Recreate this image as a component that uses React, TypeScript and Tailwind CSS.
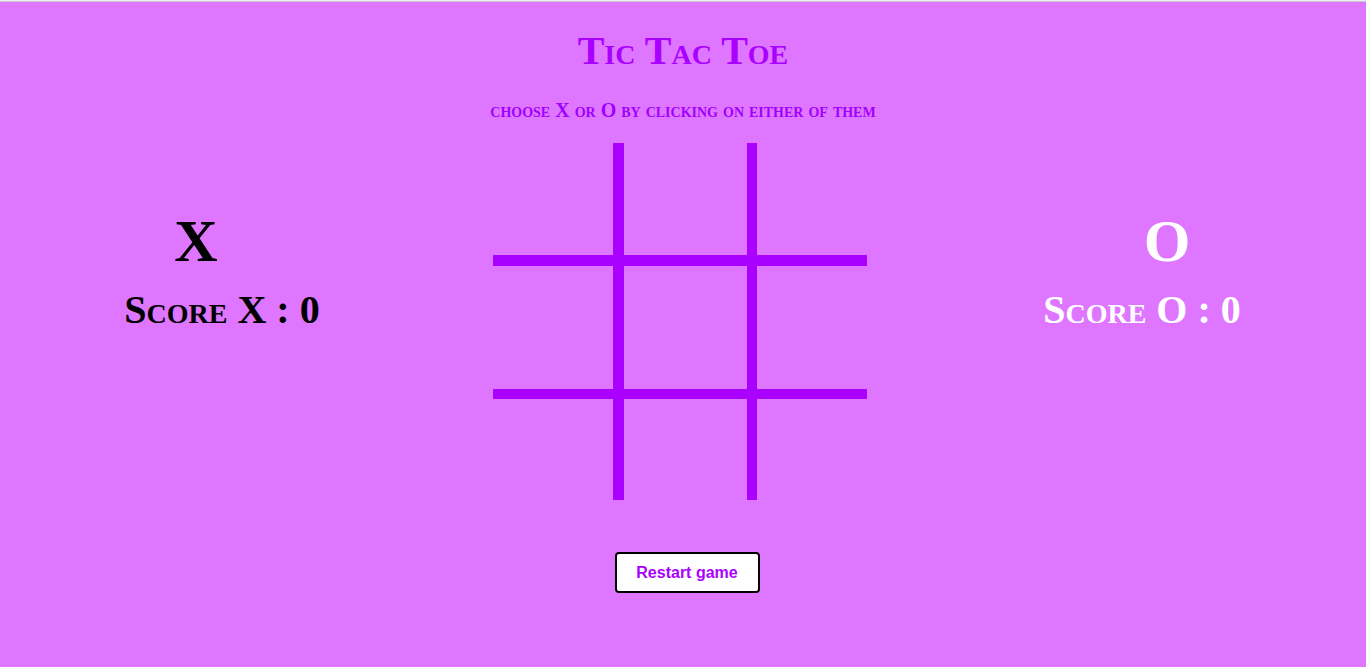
import React from "react";

const serif = { fontFamily: '"Liberation Serif", "Times New Roman", serif' };

export default function App() {
  return (
    <div className="w-full h-[667px] bg-[#df76ff] flex flex-col overflow-hidden" style={serif}>
      <div className="h-[1px] bg-[#eeeeee]" />
      <div className="h-[1px] bg-[#c8c8c8]" />
      <div className="flex flex-col items-center pt-[25px]">
        <h1 className="text-[40px] leading-[48px] font-bold text-[#aa00ff] [font-variant:small-caps]">
          Tic Tac Toe
        </h1>
        <p className="mt-[23px] text-[20px] leading-[24px] font-bold text-[#9f00ff] [font-variant:small-caps]">
          choose X or O by clicking on either of them
        </p>
      </div>
      <div className="flex mt-[21px]">
        <div className="w-[444px] flex flex-col items-center pt-[68px]">
          <div className="text-[60px] leading-[60px] font-bold text-black pr-[52px]">X</div>
          <div className="mt-[17px] text-[40px] leading-[44px] font-bold text-black [font-variant:small-caps]">
            Score X : 0
          </div>
        </div>
        <div className="ml-[49px] grid grid-cols-[120px_11px_123px_10px_110px] grid-rows-[112px_11px_123px_10px_101px]">
          <div className="col-start-2 row-start-1 row-span-5 bg-[#aa00ff]" />
          <div className="col-start-4 row-start-1 row-span-5 bg-[#aa00ff]" />
          <div className="col-start-1 col-span-5 row-start-2 bg-[#aa00ff]" />
          <div className="col-start-1 col-span-5 row-start-4 bg-[#aa00ff]" />
        </div>
        <div className="ml-[51px] flex-1 flex flex-col items-center pt-[68px]">
          <div className="text-[60px] leading-[60px] font-bold text-white pl-[50px]">O</div>
          <div className="mt-[17px] text-[40px] leading-[44px] font-bold text-white [font-variant:small-caps]">
            Score O : 0
          </div>
        </div>
      </div>
      <div className="flex justify-center mt-[52px]">
        <button
          className="ml-[8px] w-[145px] h-[41px] bg-white border-2 border-black rounded-[4px] text-[16px] font-bold text-[#aa00ff] flex items-center justify-center"
          style={{ fontFamily: '"Liberation Sans", Arial, sans-serif' }}
        >
          Restart game
        </button>
      </div>
    </div>
  );
}
